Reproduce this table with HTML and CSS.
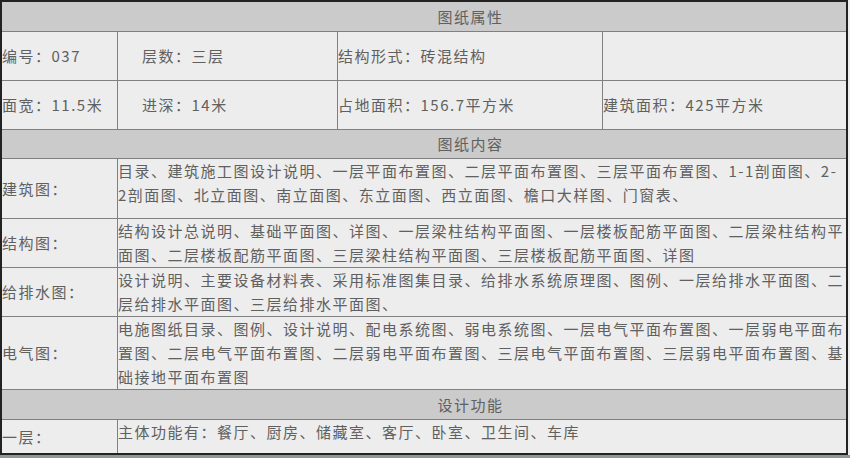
FILE: index.html
```html
<!DOCTYPE html>
<html lang="zh-CN">
<head>
<meta charset="utf-8">
<title>图纸属性</title>
<link rel="stylesheet" href="styles.css">
</head>
<body>
<table class="sheet">
  <colgroup>
    <col class="c1">
    <col class="c2">
    <col class="c3">
    <col class="c4">
  </colgroup>
  <tbody>
    <tr class="h h1"><th colspan="4">图纸属性</th></tr>
    <tr class="r48">
      <td>编号：037</td>
      <td class="ind">层数：三层</td>
      <td>结构形式：砖混结构</td>
      <td class="last"></td>
    </tr>
    <tr class="r48">
      <td>面宽：11.5米</td>
      <td class="ind">进深：14米</td>
      <td>占地面积：156.7平方米</td>
      <td class="last">建筑面积：425平方米</td>
    </tr>
    <tr class="h h2"><th colspan="4">图纸内容</th></tr>
    <tr class="r59">
      <td class="lab">建筑图：</td>
      <td colspan="3" class="txt last">目录、建筑施工图设计说明、一层平面布置图、二层平面布置图、三层平面布置图、1-1剖面图、2-2剖面图、北立面图、南立面图、东立面图、西立面图、檐口大样图、门窗表、</td>
    </tr>
    <tr class="r48">
      <td class="lab">结构图：</td>
      <td colspan="3" class="txt last">结构设计总说明、基础平面图、详图、一层梁柱结构平面图、一层楼板配筋平面图、二层梁柱结构平面图、二层楼板配筋平面图、三层梁柱结构平面图、三层楼板配筋平面图、详图</td>
    </tr>
    <tr class="r48">
      <td class="lab">给排水图：</td>
      <td colspan="3" class="txt last">设计说明、主要设备材料表、采用标准图集目录、给排水系统原理图、图例、一层给排水平面图、二层给排水平面图、三层给排水平面图、</td>
    </tr>
    <tr class="r72">
      <td class="lab">电气图：</td>
      <td colspan="3" class="txt last">电施图纸目录、图例、设计说明、配电系统图、弱电系统图、一层电气平面布置图、一层弱电平面布置图、二层电气平面布置图、二层弱电平面布置图、三层电气平面布置图、三层弱电平面布置图、基础接地平面布置图</td>
    </tr>
    <tr class="h h3"><th colspan="4">设计功能</th></tr>
    <tr class="r33">
      <td class="lab bottom">一层：</td>
      <td colspan="3" class="txt last bottom">主体功能有：餐厅、厨房、储藏室、客厅、卧室、卫生间、车库</td>
    </tr>
  </tbody>
</table>
<div class="below"></div>
</body>
</html>
```
FILE: styles.css
```css
html, body {
  margin: 0;
  padding: 0;
  background: #eeeeee;
}

.sheet {
  width: 848px;
  table-layout: fixed;
  border-collapse: separate;
  border-spacing: 0;
  border: 2px solid #222222;
  font-family: "Noto Sans CJK SC", "Noto Sans", sans-serif;
  font-size: 15px;
  letter-spacing: 1.5px;
  line-height: 24px;
  color: #606060;
  background: #ededed;
}

.c1 { width: 116px; }
.c2 { width: 220px; }
.c3 { width: 265px; }
.c4 { width: 243px; }

.sheet th,
.sheet td {
  padding: 0;
  border-right: 1px solid #808080;
  border-bottom: 1px solid #808080;
  box-sizing: border-box;
  white-space: normal;
  word-break: break-all;
}

.sheet .last,
.sheet th { border-right: none; }

.sheet .bottom { border-bottom: none; }

.h th {
  background: #cbcbcb;
  font-weight: normal;
  text-align: center;
  padding-left: 93px;
  vertical-align: middle;
}

.h1 { height: 30px; }
.h2 { height: 29px; }
.h3 { height: 30px; }

.r48 { height: 49px; }
.r59 { height: 60px; }
.r72 { height: 73px; }
.r33 { height: 33px; }

.sheet td { vertical-align: middle; }

.sheet td.ind { padding-left: 24px; }

.sheet td.txt { vertical-align: top; }

.below {
  height: 10px;
  background: #8e9993;
}
```
